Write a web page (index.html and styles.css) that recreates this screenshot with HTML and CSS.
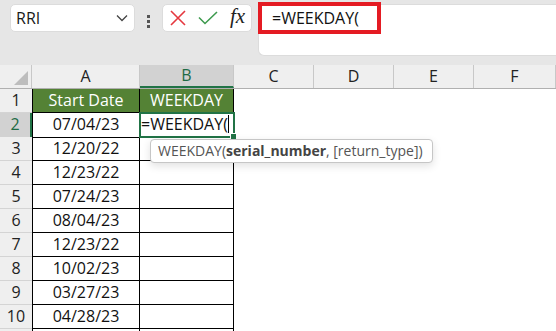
FILE: index.html
```html
<!DOCTYPE html>
<html lang="en">
<head>
  <meta charset="UTF-8">
  <title>WEEKDAY</title>
  <link rel="stylesheet" href="styles.css">
</head>
<body>
  <div class="toolbar">
    <div class="name-box">
      <span>RRI</span>
      <svg class="chevron" width="12" height="8" viewBox="0 0 12 8"><path d="M1 1.5 L6 6.5 L11 1.5" fill="none" stroke="#444" stroke-width="1.3"/></svg>
    </div>
    <div class="dots"><i></i><i></i><i></i></div>
    <div class="buttons">
      <svg width="16" height="16" viewBox="0 0 16 16"><path d="M1 1 L15 15 M15 1 L1 15" stroke="#e5383f" stroke-width="1.6"/></svg>
      <svg width="20" height="14" viewBox="0 0 20 14"><path d="M1 6.5 L7 12.5 L19 1" fill="none" stroke="#3d9a4e" stroke-width="1.6"/></svg>
      <span class="fx">fx</span>
    </div>
    <div class="formula-bar">
      <span class="formula">=WEEKDAY(</span>
    </div>
  </div>

  <div class="sheet">
    <div class="row head-row">
      <div class="corner"><svg width="14" height="14" viewBox="0 0 14 14"><path d="M14 0 L14 14 L0 14 Z" fill="#bdbdbd"/></svg></div>
      <div class="col-head">A</div>
      <div class="col-head active">B</div>
      <div class="col-head">C</div>
      <div class="col-head">D</div>
      <div class="col-head">E</div>
      <div class="col-head">F</div>
      <div class="col-head last"></div>
    </div>
    <div class="row">
      <div class="row-head">1</div>
      <div class="cell a title">Start Date</div>
      <div class="cell b title">WEEKDAY</div>
    </div>
    <div class="row">
      <div class="row-head active">2</div>
      <div class="cell a">07/04/23</div>
      <div class="cell b editing">=WEEKDAY(<span class="caret"></span><span class="handle"></span></div>
    </div>
    <div class="row">
      <div class="row-head">3</div>
      <div class="cell a">12/20/22</div>
      <div class="cell b"></div>
    </div>
    <div class="row">
      <div class="row-head">4</div>
      <div class="cell a">12/23/22</div>
      <div class="cell b"></div>
    </div>
    <div class="row">
      <div class="row-head">5</div>
      <div class="cell a">07/24/23</div>
      <div class="cell b"></div>
    </div>
    <div class="row">
      <div class="row-head">6</div>
      <div class="cell a">08/04/23</div>
      <div class="cell b"></div>
    </div>
    <div class="row">
      <div class="row-head">7</div>
      <div class="cell a">12/23/22</div>
      <div class="cell b"></div>
    </div>
    <div class="row">
      <div class="row-head">8</div>
      <div class="cell a">10/02/23</div>
      <div class="cell b"></div>
    </div>
    <div class="row">
      <div class="row-head">9</div>
      <div class="cell a">03/27/23</div>
      <div class="cell b"></div>
    </div>
    <div class="row">
      <div class="row-head">10</div>
      <div class="cell a">04/28/23</div>
      <div class="cell b"></div>
    </div>
    <div class="row">
      <div class="row-head"></div>
      <div class="cell a"></div>
      <div class="cell b"></div>
    </div>

    <div class="tooltip">WEEKDAY(<b>serial_number</b>, [return_type])</div>
  </div>
</body>
</html>
```

FILE: styles.css
```css
body {
  margin: 0;
  font-family: 'Open Sans', 'Noto Sans', sans-serif;
  color: #222;
  background: white;
  height: 331px;
  overflow: hidden;
}

.toolbar {
  height: 65px;
  background: #e6e6e6;
  display: flex;
  align-items: flex-start;
  padding: 4px 0 0 10px;
  box-sizing: border-box;
}

.name-box {
  width: 125px;
  height: 28px;
  box-sizing: border-box;
  background: white;
  border: 1px solid #dcdcdc;
  border-radius: 5px;
  display: flex;
  align-items: center;
  justify-content: space-between;
  padding: 0 6px 0 5px;
  font-size: 16px;
  color: #1a1a1a;
}

.dots {
  width: 27px;
  display: flex;
  flex-direction: column;
  align-items: center;
  gap: 2px;
  padding-top: 11px;
}

.dots i {
  width: 3px;
  height: 3px;
  background: #555;
}

.buttons {
  width: 90px;
  height: 28px;
  box-sizing: border-box;
  background: white;
  border: 1px solid #dcdcdc;
  border-radius: 5px;
  display: flex;
  align-items: center;
  gap: 12px;
  padding-left: 7px;
}

.fx {
  font-family: 'Liberation Serif', serif;
  font-style: italic;
  font-size: 21px;
  color: #222;
  margin-top: -3px;
}

.formula-bar {
  flex: 1;
  height: 52px;
  margin-left: 6px;
  background: white;
  border: 1px solid #dcdcdc;
  border-right: none;
  border-radius: 6px 0 0 6px;
  box-sizing: border-box;
  position: relative;
}

.formula {
  position: absolute;
  left: -1px;
  top: -3px;
  width: 123px;
  height: 32px;
  box-sizing: border-box;
  border: 4px solid #e41b23;
  padding: 1px 0 0 10px;
  font-size: 16px;
  color: #111;
}

.sheet {
  position: relative;
}

.row {
  display: grid;
  grid-template-columns: 32px 108px 94px 80px 80px 80px 1fr;
  height: 24px;
}

.head-row {
  height: 23px;
  background: #efefef;
  border-bottom: 1px solid #b0b0b0;
}

.corner {
  display: flex;
  align-items: flex-end;
  justify-content: flex-end;
  padding: 0 3px 3px 0;
  border-right: 1px solid #c8c8c8;
}

.col-head {
  text-align: center;
  font-size: 16px;
  line-height: 23px;
  border-right: 1px solid #c8c8c8;
  color: #222;
}

.col-head.active {
  background: #d2d2d2;
  color: #1e6b45;
  border-bottom: 2px solid #217346;
  line-height: 21px;
}

.col-head.last {
  border-right: none;
}

.row-head {
  background: #efefef;
  border-bottom: 1px solid #d4d4d4;
  text-align: center;
  font-size: 16px;
  line-height: 23px;
  color: #222;
}

.row-head.active {
  background: #d2d2d2;
  color: #1e6b45;
  border-right: 2px solid #217346;
}

.cell {
  box-sizing: border-box;
  border-right: 1px solid #000;
  border-bottom: 1px solid #000;
  text-align: center;
  font-size: 16px;
  line-height: 23px;
  color: #111;
  position: relative;
}

.cell.a {
  border-left: 1px solid #000;
}

.cell.title {
  background: #548235;
  color: white;
}

.cell.editing {
  text-align: left;
  border: 2px solid #217346;
  line-height: 20px;
  padding-left: 0;
  font-size: 16px;
  margin: -1px 0 0 -1px;
  width: 96px;
  height: 26px;
  z-index: 1;
  background: white;
}

.caret {
  display: inline-block;
  width: 1px;
  height: 18px;
  background: #000;
  vertical-align: -3px;
}

.handle {
  position: absolute;
  right: -4px;
  bottom: -4px;
  width: 5px;
  height: 5px;
  background: #217346;
  border: 1px solid white;
}

.tooltip {
  position: absolute;
  left: 150px;
  top: 74px;
  width: 283px;
  height: 24px;
  box-sizing: border-box;
  padding: 0 7px;
  background: white;
  border: 1px solid #c6c6c6;
  border-radius: 4px;
  box-shadow: 0 3px 8px rgba(0, 0, 0, 0.12);
  font-size: 14px;
  line-height: 22px;
  color: #555;
  white-space: nowrap;
  z-index: 2;
}

.tooltip b {
  color: #444;
}
```
